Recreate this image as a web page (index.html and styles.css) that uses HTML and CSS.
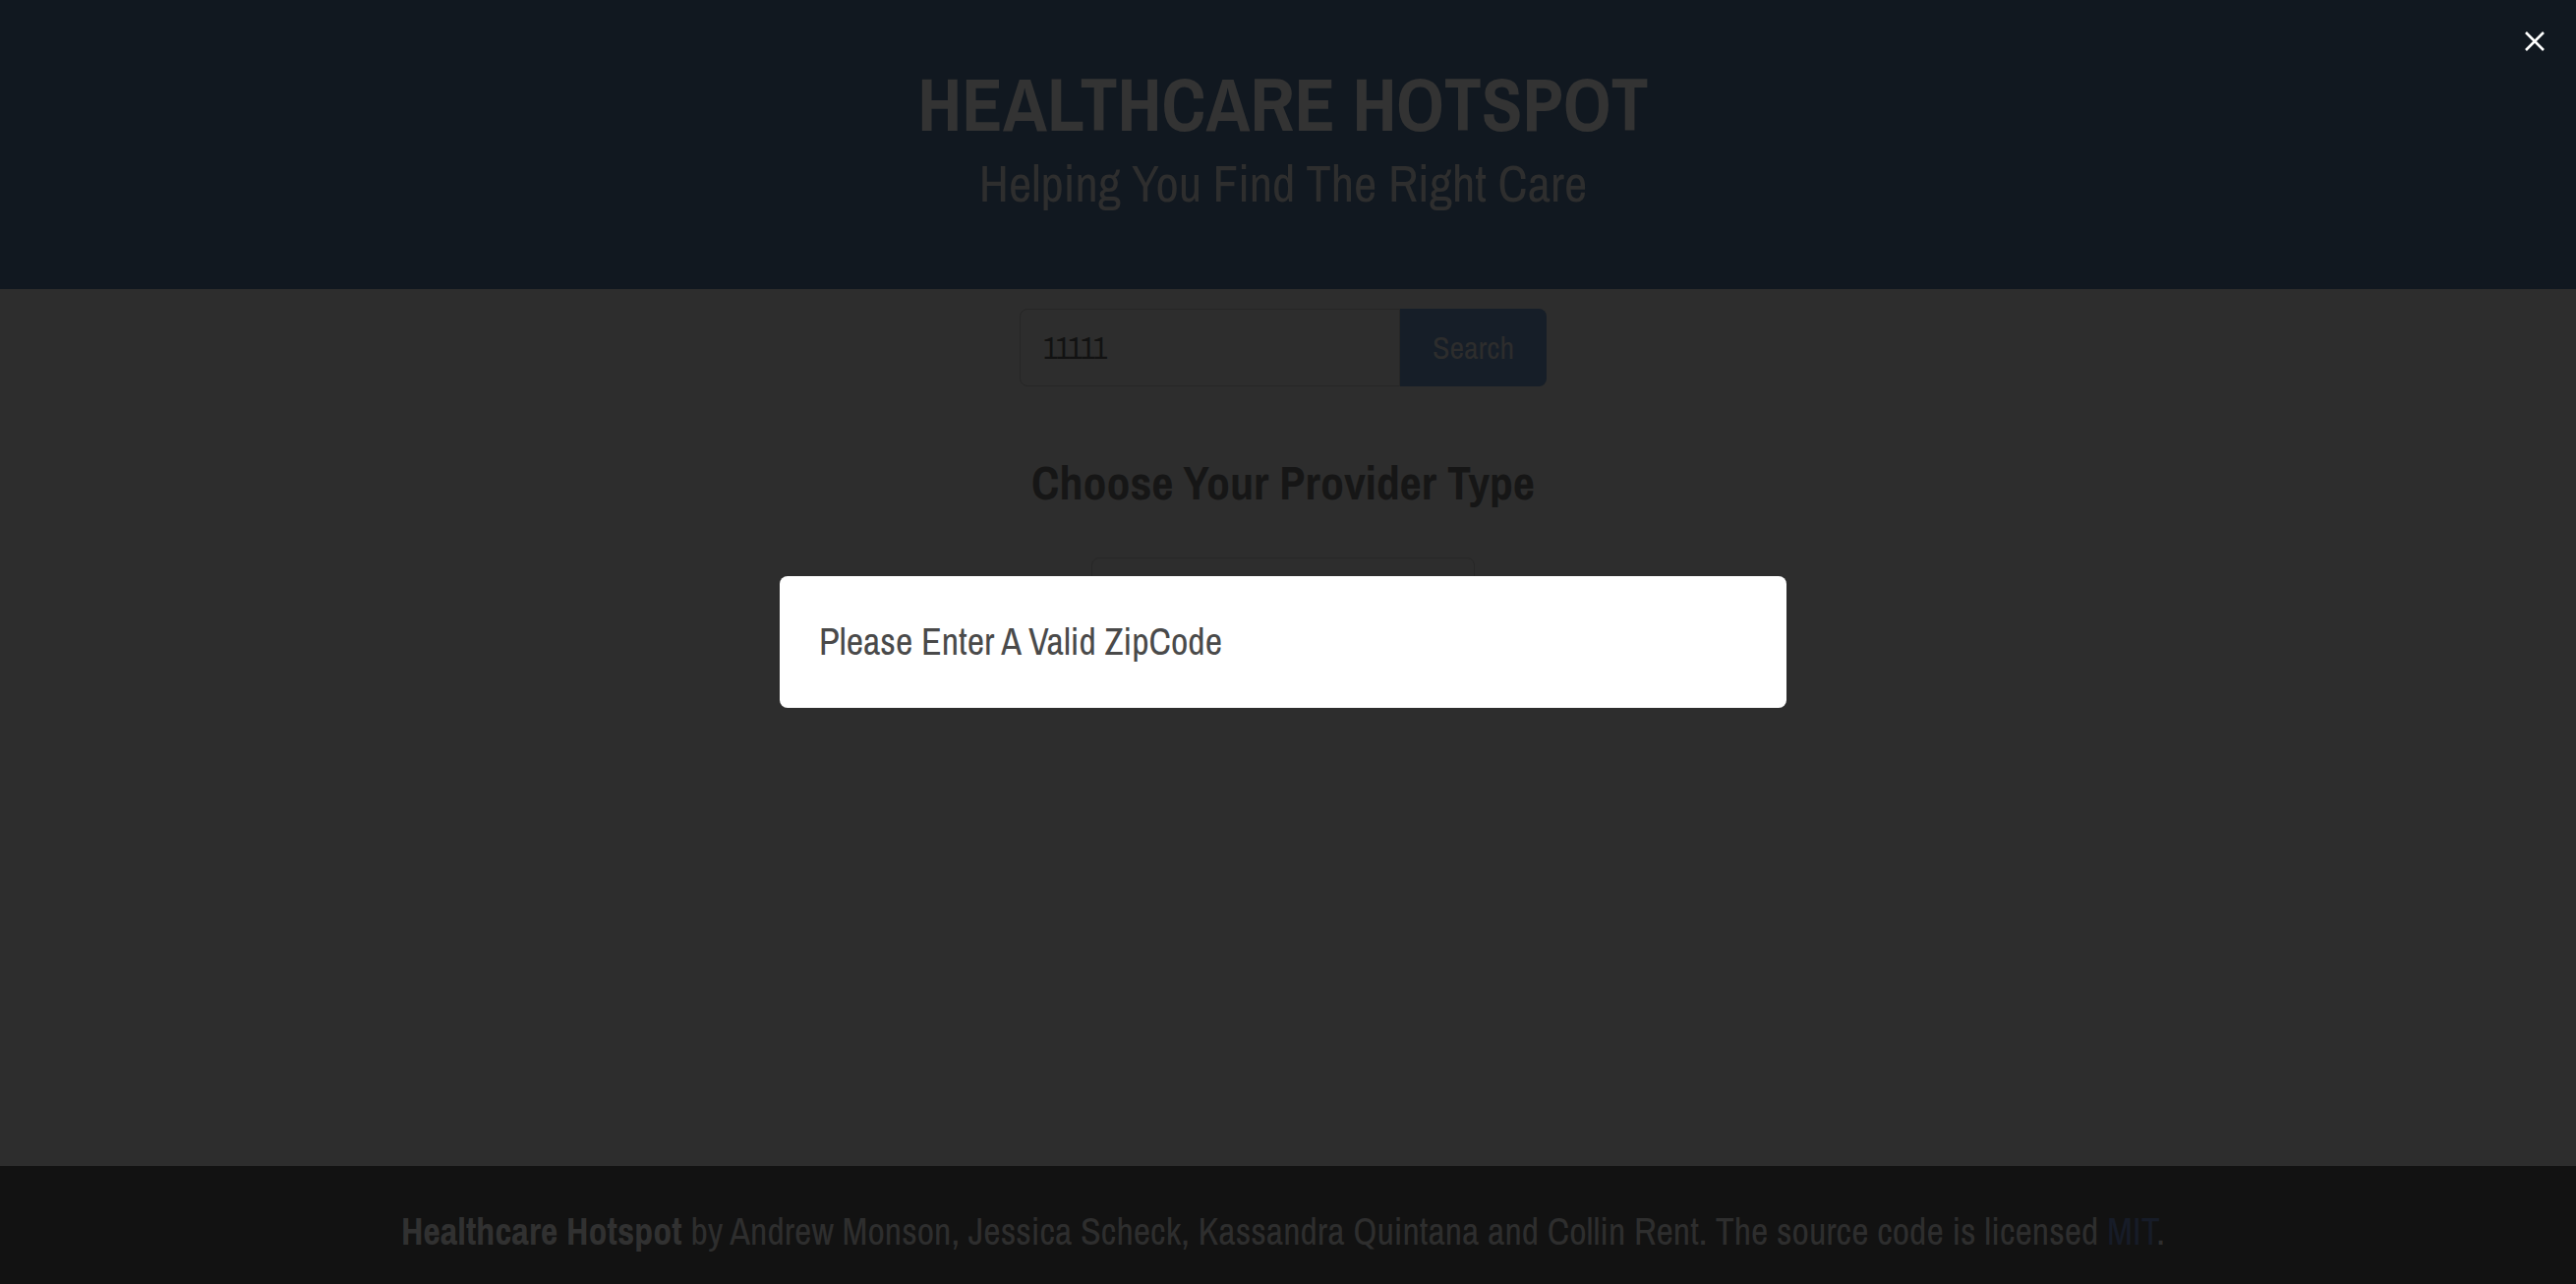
FILE: index.html
```html
<!DOCTYPE html>
<html lang="en">
<head>
<meta charset="utf-8">
<title>Healthcare Hotspot</title>
<link rel="stylesheet" href="styles.css">
</head>
<body>
<div class="page">
  <header class="hero">
    <h1 class="title">HEALTHCARE HOTSPOT</h1>
    <h2 class="subtitle">Helping You Find The Right Care</h2>
  </header>
  <main class="main">
    <form class="search">
      <input class="input" type="text" value="11111">
      <button class="button" type="button">Search</button>
    </form>
    <h3 class="heading">Choose Your Provider Type</h3>
    <div class="select-box"></div>
  </main>
  <footer class="footer">
    <p><strong>Healthcare Hotspot</strong> by Andrew Monson, Jessica Scheck, Kassandra Quintana and Collin Rent. The source code is licensed <a href="#">MIT</a>.</p>
  </footer>
</div>
<div class="modal">
  <div class="modal-background"></div>
  <div class="modal-content">
    <p>Please Enter A Valid ZipCode</p>
  </div>
  <button class="modal-close" type="button" aria-label="close">
    <svg width="20" height="20" viewBox="0 0 20 20"><path d="M1 1L19 19M19 1L1 19" stroke="#ffffff" stroke-width="2.6" fill="none"/></svg>
  </button>
</div>
</body>
</html>
```
FILE: styles.css
```css
* { box-sizing: border-box; }
html, body { margin: 0; padding: 0; }
body {
  font-family: "Liberation Sans Narrow", "Archivo Narrow", "Arial Narrow", "Liberation Sans", sans-serif;
  background: #2d2d2d;
  color: #2e2e2e;
}
.page {
  display: flex;
  flex-direction: column;
  min-height: 100vh;
}
.hero {
  background: #111820;
  height: 294px;
  padding: 63px 10px 0 0;
  display: flex;
  flex-direction: column;
  align-items: center;
  gap: 6px;
}
.title {
  margin: 0;
  font-size: 76px;
  line-height: 85.5px;
  font-weight: 700;
  color: #333333;
}
.subtitle {
  margin: 0;
  font-size: 51px;
  line-height: 64px;
  font-weight: 400;
  color: #2e2e2e;
}
.main {
  flex: 1;
  display: flex;
  flex-direction: column;
  align-items: center;
  padding: 20px 10px 0 0;
}
.search {
  display: flex;
  margin: 0;
}
.input {
  width: 387px;
  height: 79px;
  font-family: inherit;
  font-size: 32px;
  padding: 0 23px;
  background: #2d2d2d;
  border: 1px solid #262626;
  border-radius: 8px 0 0 8px;
  color: #121212;
  outline: none;
}
.button {
  width: 149px;
  height: 79px;
  font-family: inherit;
  font-size: 32px;
  background: #161e28;
  color: #2d2d2d;
  border: none;
  border-radius: 0 8px 8px 0;
  padding: 0;
}
.heading {
  margin: 71px 0 0;
  font-size: 48px;
  line-height: 54px;
  font-weight: 700;
  color: #161616;
}
.select-box {
  margin-top: 49px;
  width: 390px;
  height: 120px;
  border: 1px solid #272727;
  border-radius: 8px;
}
.footer {
  background: #121212;
  height: 120px;
  padding: 40px 10px 0 0;
  text-align: center;
}
.footer p {
  margin: 0;
  font-size: 38px;
  line-height: 54px;
  color: #2e2e2e;
}
.footer strong { color: #313131; font-weight: 700; }
.footer a { color: #171c28; text-decoration: none; }
.modal {
  position: fixed;
  inset: 0;
  display: flex;
  align-items: center;
  justify-content: center;
  padding-right: 10px;
}
.modal-background {
  position: absolute;
  inset: 0;
  background: transparent;
}
.modal-content {
  position: relative;
  width: 1024px;
  background: #ffffff;
  border-radius: 8px;
  padding: 40px 40px;
}
.modal-content p {
  margin: 0;
  font-size: 38px;
  line-height: 54px;
  color: #4a4a4a;
}
.modal-close {
  position: absolute;
  top: 22px;
  right: 22px;
  width: 40px;
  height: 40px;
  border: none;
  background: transparent;
  padding: 0;
  display: flex;
  align-items: center;
  justify-content: center;
}
.modal-close svg { display: block; }
```
